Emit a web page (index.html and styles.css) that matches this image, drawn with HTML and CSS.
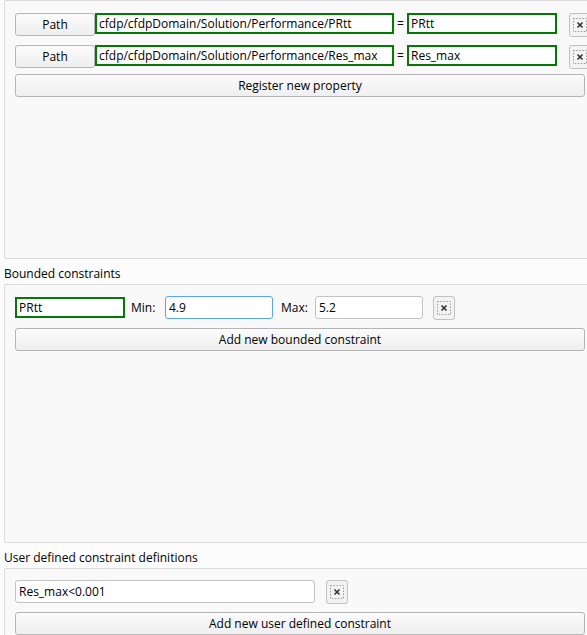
FILE: index.html
```html
<!DOCTYPE html>
<html>
<head>
<meta charset="utf-8">
<link rel="stylesheet" href="styles.css">
</head>
<body>
<div class="page">
  <div class="panel panel-props">
    <div class="row">
      <button class="btn path-btn">Path</button>
      <input class="field green path-field" value="cfdp/cfdpDomain/Solution/Performance/PRtt">
      <span class="eq">=</span>
      <input class="field green name-field" value="PRtt">
      <button class="close"><svg width="16" height="16" viewBox="0 0 16 16"><rect x="1.5" y="1.5" width="13" height="13" fill="none" stroke="#9a9a9a" stroke-dasharray="1.5 1.5"/><path d="M5.5 5.5 L10.5 10.5 M10.5 5.5 L5.5 10.5" stroke="#333" stroke-width="1.6"/></svg></button>
    </div>
    <div class="row">
      <button class="btn path-btn">Path</button>
      <input class="field green path-field" value="cfdp/cfdpDomain/Solution/Performance/Res_max">
      <span class="eq">=</span>
      <input class="field green name-field" value="Res_max">
      <button class="close"><svg width="16" height="16" viewBox="0 0 16 16"><rect x="1.5" y="1.5" width="13" height="13" fill="none" stroke="#9a9a9a" stroke-dasharray="1.5 1.5"/><path d="M5.5 5.5 L10.5 10.5 M10.5 5.5 L5.5 10.5" stroke="#333" stroke-width="1.6"/></svg></button>
    </div>
    <button class="btn wide reg">Register new property</button>
  </div>
  <div class="label">Bounded constraints</div>
  <div class="panel panel-bounded">
    <div class="row">
      <input class="field green bound-name" value="PRtt">
      <span class="lbl min-lbl">Min:</span>
      <input class="field focus num" value="4.9">
      <span class="lbl max-lbl">Max:</span>
      <input class="field num" value="5.2">
      <button class="close close-b"><svg width="16" height="16" viewBox="0 0 16 16"><rect x="1.5" y="1.5" width="13" height="13" fill="none" stroke="#9a9a9a" stroke-dasharray="1.5 1.5"/><path d="M5.5 5.5 L10.5 10.5 M10.5 5.5 L5.5 10.5" stroke="#333" stroke-width="1.6"/></svg></button>
    </div>
    <button class="btn wide">Add new bounded constraint</button>
  </div>
  <div class="label">User defined constraint definitions</div>
  <div class="panel panel-user">
    <div class="row">
      <input class="field user-field" value="Res_max&lt;0.001">
      <button class="close close-u"><svg width="16" height="16" viewBox="0 0 16 16"><rect x="1.5" y="1.5" width="13" height="13" fill="none" stroke="#9a9a9a" stroke-dasharray="1.5 1.5"/><path d="M5.5 5.5 L10.5 10.5 M10.5 5.5 L5.5 10.5" stroke="#333" stroke-width="1.6"/></svg></button>
    </div>
    <button class="btn wide">Add new user defined constraint</button>
  </div>
</div>
</body>
</html>
```
FILE: styles.css
```css
html, body {
  margin: 0;
  padding: 0;
  background: #fcfcfc;
  overflow: hidden;
}
body {
  font-family: "Open Sans", "Noto Sans", sans-serif;
  font-size: 12px;
  color: #000;
}
.page {
  width: 592px;
  padding-left: 4px;
  display: flex;
  flex-direction: column;
}
.panel {
  background: #f9f9f9;
  border: 1px solid #dcdcdc;
  border-radius: 2px;
  padding: 12px 10px 0 10px;
  display: flex;
  flex-direction: column;
  box-sizing: border-box;
  flex: none;
}
.panel-props { height: 259px; }
.panel-bounded { height: 259px; padding-top: 11px; }
.panel-user { height: 80px; padding-top: 11px; }
.label {
  height: 25px;
  line-height: 29px;
  padding-left: 0;
  white-space: nowrap;
  flex: none;
}
.row {
  display: flex;
  align-items: flex-start;
  height: 24px;
  margin-bottom: 8px;
}
.panel-props .row + .btn { margin-top: -3px; }
.btn {
  font: inherit;
  color: #000;
  height: 23px;
  border: 1px solid #b5b5b5;
  border-radius: 3px;
  background: linear-gradient(#fbfbfb, #efefef);
  padding: 0;
  box-sizing: border-box;
  text-align: center;
}
.path-btn { width: 80px; flex: none; }
.wide { width: 570px; }
.field {
  font: inherit;
  color: #000;
  height: 22px;
  box-sizing: border-box;
  border: 1px solid #c3c3c3;
  border-radius: 3px;
  background: #fff;
  padding: 0 3px;
  outline: none;
  flex: none;
}
.field.green {
  border: 2px solid #007a00;
  border-radius: 0;
  height: 21px;
  padding: 0 2px;
}
.field.focus { border-color: #53a8ef; }
.path-field { width: 299px; margin-left: 0; }
.eq { width: 13px; text-align: center; line-height: 21px; flex: none; }
.name-field { width: 150px; }
.close {
  width: 22px;
  height: 24px;
  margin-left: 12px;
  flex: none;
  border: 1px solid #c0c0c0;
  border-radius: 3px;
  background: #f3f3f3;
  padding: 0;
  display: flex;
  align-items: center;
  justify-content: center;
  box-sizing: border-box;
}
.close svg { display: block; }
.bound-name { width: 110px; height: 22px; margin-top: 1px; }
.lbl { line-height: 24px; flex: none; }
.min-lbl { margin-left: 6px; width: 34px; }
.max-lbl { margin-left: 8px; width: 34px; }
.num { width: 108px; height: 23px; }
.close-b { margin-left: 10px; }
.user-field { width: 300px; height: 23px; }
.close-u { margin-left: 11px; }
```
